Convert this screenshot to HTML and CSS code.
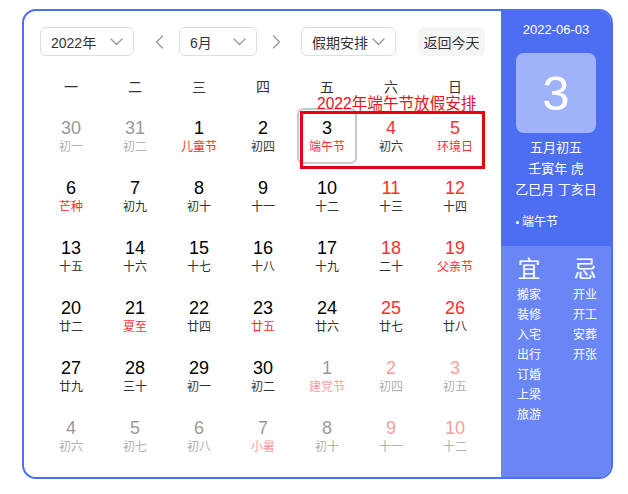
FILE: index.html
```html
<!DOCTYPE html>
<html lang="zh-CN">
<head>
<meta charset="utf-8">
<title>万年历</title>
<link rel="stylesheet" href="styles.css">
</head>
<body>
<div class="card">
  <div class="main">
    <div class="toolbar">
      <div class="select sel-year"><span>2022年</span><svg class="chev" width="13" height="8" viewBox="0 0 13 8"><polyline points="1,1 6.5,6.5 12,1"/></svg></div>
      <div class="arrow arrow-prev"><svg width="9" height="14" viewBox="0 0 9 14"><polyline points="7.5,1 1.5,7 7.5,13"/></svg></div>
      <div class="select sel-month"><span>6月</span><svg class="chev" width="13" height="8" viewBox="0 0 13 8"><polyline points="1,1 6.5,6.5 12,1"/></svg></div>
      <div class="arrow arrow-next"><svg width="9" height="14" viewBox="0 0 9 14"><polyline points="1.5,1 7.5,7 1.5,13"/></svg></div>
      <div class="select sel-hol"><span>假期安排</span><svg class="chev" width="13" height="8" viewBox="0 0 13 8"><polyline points="1,1 6.5,6.5 12,1"/></svg></div>
      <div class="today-btn">返回今天</div>
    </div>
    <div class="weekdays">
      <span>一</span><span>二</span><span>三</span><span>四</span><span>五</span><span>六</span><span>日</span>
    </div>
    <div class="days">
      <div class="day other"><span class="n">30</span><span class="l">初一</span></div>
      <div class="day other"><span class="n">31</span><span class="l">初二</span></div>
      <div class="day"><span class="n">1</span><span class="l red">儿童节</span></div>
      <div class="day"><span class="n">2</span><span class="l">初四</span></div>
      <div class="day sel"><span class="n">3</span><span class="l red">端午节</span></div>
      <div class="day wk"><span class="n">4</span><span class="l">初六</span></div>
      <div class="day wk"><span class="n">5</span><span class="l red">环境日</span></div>

      <div class="day"><span class="n">6</span><span class="l red">芒种</span></div>
      <div class="day"><span class="n">7</span><span class="l">初九</span></div>
      <div class="day"><span class="n">8</span><span class="l">初十</span></div>
      <div class="day"><span class="n">9</span><span class="l">十一</span></div>
      <div class="day"><span class="n">10</span><span class="l">十二</span></div>
      <div class="day wk"><span class="n">11</span><span class="l">十三</span></div>
      <div class="day wk"><span class="n">12</span><span class="l">十四</span></div>

      <div class="day"><span class="n">13</span><span class="l">十五</span></div>
      <div class="day"><span class="n">14</span><span class="l">十六</span></div>
      <div class="day"><span class="n">15</span><span class="l">十七</span></div>
      <div class="day"><span class="n">16</span><span class="l">十八</span></div>
      <div class="day"><span class="n">17</span><span class="l">十九</span></div>
      <div class="day wk"><span class="n">18</span><span class="l">二十</span></div>
      <div class="day wk"><span class="n">19</span><span class="l red">父亲节</span></div>

      <div class="day"><span class="n">20</span><span class="l">廿二</span></div>
      <div class="day"><span class="n">21</span><span class="l red">夏至</span></div>
      <div class="day"><span class="n">22</span><span class="l">廿四</span></div>
      <div class="day"><span class="n">23</span><span class="l red">廿五</span></div>
      <div class="day"><span class="n">24</span><span class="l">廿六</span></div>
      <div class="day wk"><span class="n">25</span><span class="l">廿七</span></div>
      <div class="day wk"><span class="n">26</span><span class="l">廿八</span></div>

      <div class="day"><span class="n">27</span><span class="l">廿九</span></div>
      <div class="day"><span class="n">28</span><span class="l">三十</span></div>
      <div class="day"><span class="n">29</span><span class="l">初一</span></div>
      <div class="day"><span class="n">30</span><span class="l">初二</span></div>
      <div class="day other"><span class="n">1</span><span class="l red">建党节</span></div>
      <div class="day other wk"><span class="n">2</span><span class="l">初四</span></div>
      <div class="day other wk"><span class="n">3</span><span class="l">初五</span></div>

      <div class="day other"><span class="n">4</span><span class="l">初六</span></div>
      <div class="day other"><span class="n">5</span><span class="l">初七</span></div>
      <div class="day other"><span class="n">6</span><span class="l">初八</span></div>
      <div class="day other"><span class="n">7</span><span class="l red">小暑</span></div>
      <div class="day other"><span class="n">8</span><span class="l">初十</span></div>
      <div class="day other wk"><span class="n">9</span><span class="l">十一</span></div>
      <div class="day other wk"><span class="n">10</span><span class="l">十二</span></div>
    </div>
  </div>
  <div class="side">
    <div class="side-top">
      <div class="date">2022-06-03</div>
      <div class="big">3</div>
      <div class="lunar">
        <div>五月初五</div>
        <div>壬寅年 虎</div>
        <div>乙巳月 丁亥日</div>
      </div>
      <div class="festival"><span class="dot"></span>端午节</div>
    </div>
    <div class="side-bottom">
      <div class="col">
        <div class="col-title">宜</div>
        <ul class="items">
          <li>搬家</li><li>装修</li><li>入宅</li><li>出行</li><li>订婚</li><li>上梁</li><li>旅游</li>
        </ul>
      </div>
      <div class="col">
        <div class="col-title">忌</div>
        <ul class="items">
          <li>开业</li><li>开工</li><li>安葬</li><li>开张</li>
        </ul>
      </div>
    </div>
  </div>
  <div class="note">2022年端午节放假安排</div>
  <div class="hl-box"></div>
</div>
</body>
</html>
```

FILE: styles.css
```css
body {
  margin: 0;
  background: #fff;
  font-family: "Liberation Sans", "Noto Sans CJK SC", sans-serif;
}

.card {
  position: relative;
  margin: 9px 0 0 22px;
  width: 591px;
  height: 470px;
  box-sizing: border-box;
  border: 2px solid #4e6ef2;
  border-radius: 14px;
  overflow: hidden;
  display: flex;
  background: #fff;
}

.main {
  flex: 1;
  padding: 16px 0 0 16px;
}

.toolbar {
  display: flex;
  align-items: center;
  height: 29px;
}

.select {
  box-sizing: border-box;
  height: 29px;
  border: 1px solid #dcdee3;
  border-radius: 6px;
  display: flex;
  align-items: center;
  justify-content: space-between;
  padding: 0 10px;
  font-size: 14px;
  color: #333;
}

.sel-year { width: 94px; }
.sel-month { width: 78px; }
.sel-hol { width: 95px; }

.chev polyline,
.arrow polyline {
  fill: none;
  stroke: #999;
  stroke-width: 1.4;
  stroke-linecap: round;
  stroke-linejoin: round;
}

.arrow {
  width: 20px;
  display: flex;
  justify-content: center;
  align-items: center;
}

.arrow-prev { margin: 0 10px 0 15px; }
.arrow-next { margin: 0 15px 0 9px; }

.today-btn {
  margin-left: 22px;
  width: 67px;
  height: 29px;
  background: #f5f5f6;
  border-radius: 6px;
  display: flex;
  align-items: center;
  justify-content: center;
  font-size: 14px;
  color: #333;
}

.weekdays {
  display: grid;
  grid-template-columns: repeat(7, 60px);
  column-gap: 4px;
  margin: 21px 0 0 1px;
  line-height: 20px;
  font-size: 14px;
  text-align: center;
  color: #333;
}

.days {
  display: grid;
  grid-template-columns: repeat(7, 60px);
  grid-auto-rows: 56px;
  gap: 4px;
  margin: 11px 0 0 1px;
}

.day {
  box-sizing: border-box;
  padding-top: 9px;
  text-align: center;
  border-radius: 6px;
}

.day .n {
  display: block;
  font-size: 18px;
  line-height: 22px;
  color: #000;
}

.day .l {
  display: block;
  font-size: 12px;
  line-height: 16px;
  color: #333;
}

.day .l.red { color: #f73131; }
.day.wk .n { color: #f73131; }

.day.other .n { color: #9a9a9a; }
.day.other .l { color: #b0b0b0; }
.day.other .l.red { color: #f5a0a0; }
.day.other.wk .n { color: #f5a0a0; }

.day.sel {
  border: 2px solid #c6c9cf;
  padding-top: 7px;
}

.side {
  width: 110px;
  display: flex;
  flex-direction: column;
  color: #fff;
}

.side-top {
  background: #4e6ef2;
  padding: 9px 0 15px;
  text-align: center;
}

.date {
  font-size: 13px;
  line-height: 20px;
}

.big {
  width: 80px;
  height: 80px;
  margin: 13px auto 0;
  background: #a0b2f8;
  border-radius: 8px;
  font-size: 49px;
  line-height: 80px;
}

.lunar {
  margin-top: 4px;
  font-size: 13px;
  line-height: 21px;
}

.festival {
  margin-top: 13px;
  text-align: left;
  padding-left: 15px;
  font-size: 12px;
  line-height: 18px;
  display: flex;
  align-items: center;
}

.dot {
  width: 3px;
  height: 3px;
  border-radius: 50%;
  background: #fff;
  margin-right: 3px;
}

.side-bottom {
  flex: 1;
  background: #6a86f5;
  padding-top: 10px;
  display: grid;
  grid-template-columns: 56px 56px;
  align-content: start;
}

.col { text-align: center; }

.col-title {
  font-size: 23px;
  line-height: 26px;
}

.items {
  list-style: none;
  margin: 3px 0 0;
  padding: 0;
  font-size: 12px;
  line-height: 20px;
}

.note {
  position: absolute;
  left: 293px;
  top: 85px;
  font-size: 15.6px;
  line-height: 16px;
  color: #e8141c;
  white-space: nowrap;
}

.hl-box {
  position: absolute;
  left: 276px;
  top: 100px;
  width: 185px;
  height: 58px;
  box-sizing: border-box;
  border: 3px solid #e60012;
}
```
